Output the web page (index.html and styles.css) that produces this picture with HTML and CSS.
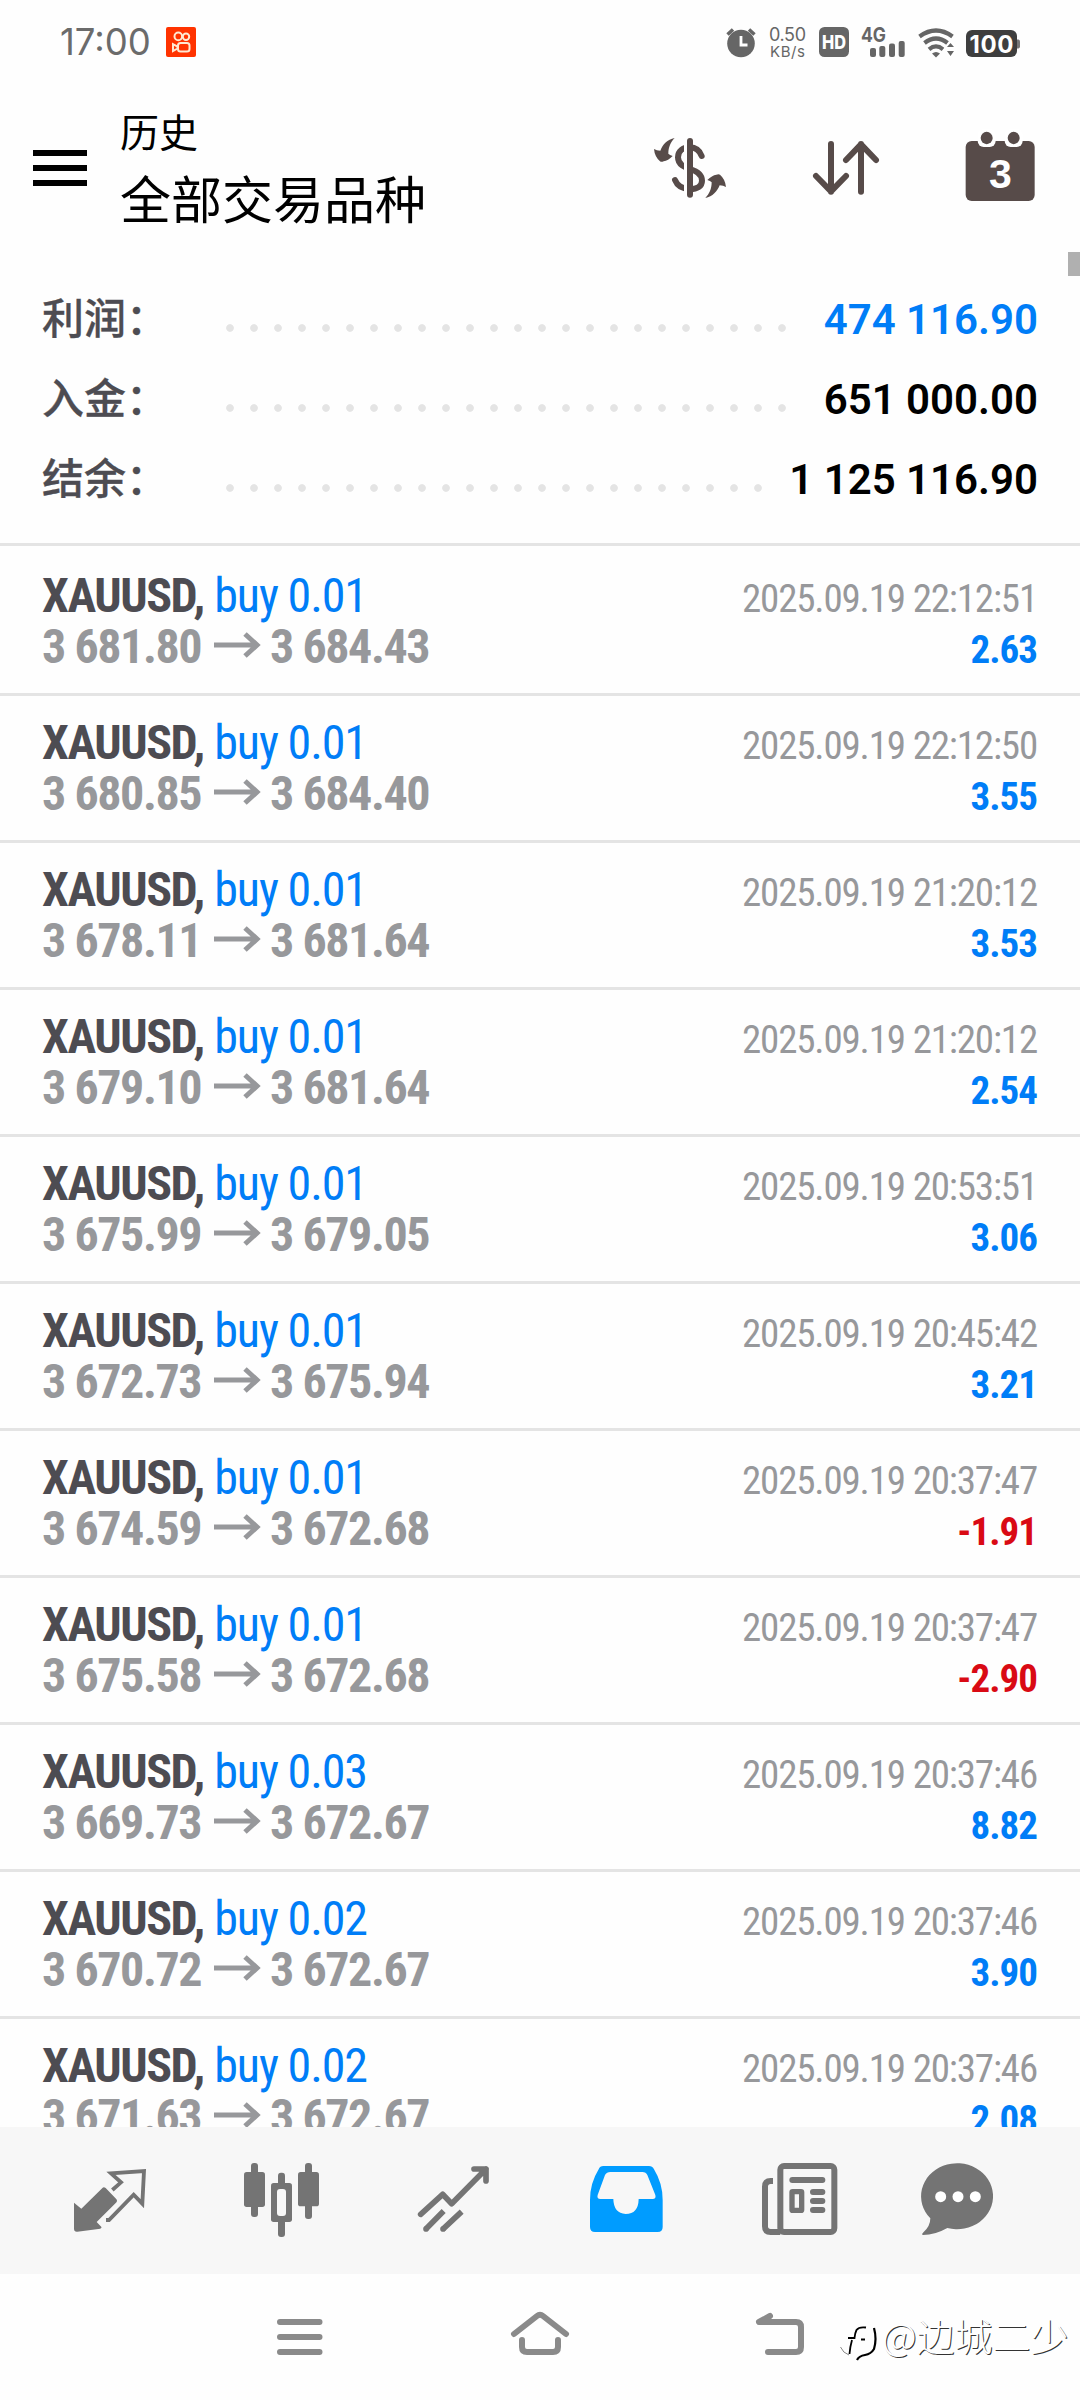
FILE: index.html
```html
<!DOCTYPE html>
<html lang="zh-CN">
<head>
<meta charset="utf-8">
<title>历史</title>
<link rel="stylesheet" href="styles.css">
</head>
<body>
<svg class="defs" width="0" height="0" aria-hidden="true">
  <symbol id="arrow" viewBox="0 0 47 26"><path d="M0 13H43M31 2L43 13L31 24" fill="none" stroke="currentColor" stroke-width="5"/></symbol>
</svg>

<div class="status">
  <span class="clock">17:00</span>
  <svg class="app-badge" width="30" height="30" viewBox="0 0 30 30"><rect width="30" height="30" rx="2" fill="#ff3300"/><g fill="none" stroke="#ffe9d2" stroke-width="2"><circle cx="12.3" cy="9.4" r="3.8"/><circle cx="20" cy="9.8" r="3.2"/><rect x="12" y="16" width="11.5" height="8.5" rx="2.5"/><path d="M7 17.2L11.5 19.5V21.500L7 24Z"/></g></svg>
  <svg class="status-icons" width="310" height="34" viewBox="720 25 310 34">
    <g fill="#666">
      <circle cx="741" cy="43.500" r="13.800"/>
      <path d="M727.500 34.500L733 29.500M754.500 34.500L749 29.500" stroke="#666" stroke-width="3.500"/>
      <path d="M741 36V45H747.500" fill="none" stroke="#fff" stroke-width="2.800"/>
      <text x="769" y="41" class="t-speed" textLength="37">0.50</text>
      <text x="770" y="56.500" class="t-unit" textLength="35">KB/s</text>
      <rect x="819" y="27" width="30" height="30" rx="5.500"/>
      <text x="822" y="49" class="t-hd" textLength="24" lengthAdjust="spacingAndGlyphs">HD</text>
      <text x="861" y="42" class="t-net" textLength="25" lengthAdjust="spacingAndGlyphs">4G</text>
      <rect x="870" y="48" width="6" height="9" rx="2"/><rect x="879.300" y="46" width="6" height="11" rx="2"/><rect x="889" y="43.500" width="6" height="13.500" rx="2"/><rect x="898.700" y="41" width="6" height="16" rx="2"/>
      <g fill="none" stroke="#666" stroke-width="4.200">
        <path d="M919.500 36.500Q936 24.500 952.500 36.500"/><path d="M924.500 43Q936 34 947.500 43"/><path d="M929 49.300Q936 43.500 943 49.300"/>
      </g>
      <path d="M932 53.500Q936 50.500 940 53.500L936 57.500Z"/>
      <path d="M944.500 47.500L950.500 40L957 47.500V51L950.500 58L944.500 51Z" fill="#fff"/>
      <path d="M947 47L950.500 43L954 47ZM947 51H954L950.500 56Z"/>
    </g>
    <rect x="966" y="30" width="51" height="27" rx="6" fill="#3e3e3e"/><path d="M1017 39.500H1018.500Q1020 40 1020 41.500V46.500Q1020 48 1018.500 48.500H1017Z" fill="#777"/>
    <text x="969.500" y="53" class="t-batt" textLength="44">100</text>
  </svg>
</div>

<header class="header">
  <div class="menu"><i></i><i></i><i></i></div>
  <div class="titles"><span class="sub">历史</span><span class="title">全部交易品种</span></div>
  <svg class="ic-money" width="76" height="76" viewBox="36 30 228 228">
    <path d="M185 108C178 90 168 82 150 82C130 82 114 92 114 112C114 135 135 142 150 147C170 153 186 162 186 182C186 199 172 207 150 207C128 207 112 198 105 180" fill="none" stroke="#574b49" stroke-width="18" stroke-linecap="round"/>
    <path d="M132 60H141V225H132Z" fill="#fff"/>
    <path d="M150 63V224" stroke="#574b49" stroke-width="18" stroke-linecap="round"/>
    <g fill="#574b49"><path id="swap" d="M104 54C82 58 68 74 61 92Q50 92 42 87Q44 110 60 124Q64 127 71 124Q84 122 98 108Q89 105 85 101C85 82 92 66 104 54Z"/><use href="#swap" transform="rotate(180 150 144)"/></g>
  </svg>
  <svg class="ic-sort" width="76" height="76" viewBox="504 30 228 228"><g fill="none" stroke="#574b49" stroke-width="18" stroke-linecap="round" stroke-linejoin="round"><path d="M573 72V215M528 168L573 214L618 168M663 215V72M618 120L663 73L708 120"/></g></svg>
  <svg class="ic-cal" width="76" height="76" viewBox="967 30 228 228"><rect x="978" y="63" width="207" height="180" rx="18" fill="#574b49"/><rect x="1014" y="27" width="54" height="54" rx="18" fill="#fff"/><rect x="1095" y="27" width="54" height="54" rx="18" fill="#fff"/><g fill="#574b49"><ellipse cx="1041" cy="54" rx="18" ry="18.500"/><ellipse cx="1122" cy="54" rx="18" ry="18.500"/></g><text x="1082" y="205" class="t-cal">3</text></svg>
</header>

<main class="scroll">
  <div class="thumb"></div>
  <section class="summary">
    <div class="sum"><span>利润：</span><i class="dots"></i><b class="up">474 116.90</b></div>
    <div class="sum"><span>入金：</span><i class="dots"></i><b>651 000.00</b></div>
    <div class="sum"><span>结余：</span><i class="dots"></i><b>1 125 116.90</b></div>
  </section>
  <section class="deals">
    <article><div class="line"><p><b>XAUUSD,</b> <em>buy 0.01</em></p><time>2025.09.19 22:12:51</time></div><div class="line"><p class="price">3 681.80<svg><use href="#arrow"/></svg>3 684.43</p><strong>2.63</strong></div></article>
    <article><div class="line"><p><b>XAUUSD,</b> <em>buy 0.01</em></p><time>2025.09.19 22:12:50</time></div><div class="line"><p class="price">3 680.85<svg><use href="#arrow"/></svg>3 684.40</p><strong>3.55</strong></div></article>
    <article><div class="line"><p><b>XAUUSD,</b> <em>buy 0.01</em></p><time>2025.09.19 21:20:12</time></div><div class="line"><p class="price">3 678.11<svg><use href="#arrow"/></svg>3 681.64</p><strong>3.53</strong></div></article>
    <article><div class="line"><p><b>XAUUSD,</b> <em>buy 0.01</em></p><time>2025.09.19 21:20:12</time></div><div class="line"><p class="price">3 679.10<svg><use href="#arrow"/></svg>3 681.64</p><strong>2.54</strong></div></article>
    <article><div class="line"><p><b>XAUUSD,</b> <em>buy 0.01</em></p><time>2025.09.19 20:53:51</time></div><div class="line"><p class="price">3 675.99<svg><use href="#arrow"/></svg>3 679.05</p><strong>3.06</strong></div></article>
    <article><div class="line"><p><b>XAUUSD,</b> <em>buy 0.01</em></p><time>2025.09.19 20:45:42</time></div><div class="line"><p class="price">3 672.73<svg><use href="#arrow"/></svg>3 675.94</p><strong>3.21</strong></div></article>
    <article><div class="line"><p><b>XAUUSD,</b> <em>buy 0.01</em></p><time>2025.09.19 20:37:47</time></div><div class="line"><p class="price">3 674.59<svg><use href="#arrow"/></svg>3 672.68</p><strong class="down">-1.91</strong></div></article>
    <article><div class="line"><p><b>XAUUSD,</b> <em>buy 0.01</em></p><time>2025.09.19 20:37:47</time></div><div class="line"><p class="price">3 675.58<svg><use href="#arrow"/></svg>3 672.68</p><strong class="down">-2.90</strong></div></article>
    <article><div class="line"><p><b>XAUUSD,</b> <em>buy 0.03</em></p><time>2025.09.19 20:37:46</time></div><div class="line"><p class="price">3 669.73<svg><use href="#arrow"/></svg>3 672.67</p><strong>8.82</strong></div></article>
    <article><div class="line"><p><b>XAUUSD,</b> <em>buy 0.02</em></p><time>2025.09.19 20:37:46</time></div><div class="line"><p class="price">3 670.72<svg><use href="#arrow"/></svg>3 672.67</p><strong>3.90</strong></div></article>
    <article><div class="line"><p><b>XAUUSD,</b> <em>buy 0.02</em></p><time>2025.09.19 20:37:46</time></div><div class="line"><p class="price">3 671.63<svg><use href="#arrow"/></svg>3 672.67</p><strong>2.08</strong></div></article>
  </section>
</main>

<nav class="tabs">
  <svg viewBox="36 60 228 240"><path d="M42 188L64 206L125 146Q130 138 137 144L168 176Q174 182 168 188L110 246L125 262L121 266L52 275Q42 276 42 266Z" fill="#747474"/><path d="M157 150L183 127L153 100L252 93L247 191L221 164L147 240H138" fill="none" stroke="#747474" stroke-width="11.500"/></svg>
  <svg viewBox="552 60 228 240"><g fill="#747474"><rect x="573" y="69" width="21" height="162" rx="9"/><rect x="552" y="96" width="63" height="105" rx="8"/><rect x="654" y="98" width="21" height="193" rx="9"/><rect x="633" y="129" width="63" height="117" rx="8"/><rect x="735" y="69" width="21" height="168" rx="9"/><rect x="714" y="96" width="63" height="103" rx="8"/></g><rect x="651" y="147" width="27" height="81" rx="9" fill="#f7f7f7"/></svg>
  <svg viewBox="1068 60 228 240"><g fill="none" stroke="#747474" stroke-width="17" stroke-linejoin="round"><path d="M1082 223L1148 163L1175 191L1278 87M1242 87H1278V123" stroke-linecap="round"/><path d="M1097 268L1151 213M1148 268L1205 215"/></g><g fill="#747474"><circle cx="1098" cy="267" r="8.500"/><circle cx="1149" cy="267" r="8.500"/></g></svg>
  <svg viewBox="145 180 228 240"><path d="M191 198H328Q338 198 343 208Q369 250 369 300V381Q369 396 354 396H166Q151 396 151 381V300Q151 250 177 208Q181 198 191 198ZM212 216H308Q319 216 323 225L347 285Q350 297 339 297H297Q296 342 258 342Q222 340 221 297H182Q171 297 174 285L196 225Q201 216 212 216Z" fill="#009cff" fill-rule="evenodd"/></svg>
  <svg viewBox="664 180 228 240" class="wide"><g fill="none" stroke="#747474" stroke-width="18"><rect x="722" y="198" width="162" height="198" rx="11"/><path d="M700 243H693Q676 243 676 260V379Q676 396 693 396H722"/><path d="M758 240H848M820 276H848M820 303H848M820 330H848" stroke-linecap="round"/><rect x="757" y="275" width="29" height="56" rx="2" stroke-width="16"/></g></svg>
  <svg viewBox="1140 180 228 240" class="last"><path d="M1171 355A108 99 0 1 1 1222 384Q1185 405 1149 405Q1144 403 1149 398Q1171 380 1171 355Z" fill="#747474"/><g fill="#fff"><circle cx="1202" cy="290" r="16.500"/><circle cx="1254" cy="290" r="16.500"/><circle cx="1306" cy="290" r="16.500"/></g></svg>
</nav>

<footer class="sysbar">
  <svg viewBox="0 0 60 60"><path d="M10 18H49.500M10 33H49.500M10 48H49.500"/></svg>
  <svg viewBox="0 0 60 60"><path d="M4 30L27 12Q30 9.500 33 12L56 30M12 36V43Q12 48 17 48H43Q48 48 48 43V36"/></svg>
  <svg viewBox="0 0 60 60"><path d="M20 12L9 18H46Q51 18 51 23V43Q51 48 46 48H18"/></svg>
  <div class="mark">
    <svg width="44" height="44" viewBox="0 0 44 44"><g fill="none" stroke="#000"><path d="M27 10.500Q20 9.500 17.500 13Q16 16 15.500 21H9M13 23Q11 30 10.500 37" stroke-width="1.800"/><path d="M10 38Q4 36 1.500 30" stroke="#888" stroke-width="1"/><path d="M35 11Q38 22 35 32Q32 37 26 38Q20 39 18 43M22 22.500H26" stroke-width="2.200"/></g></svg><span>@边城二少</span>
  </div>
</footer>
</body>
</html>
```
FILE: styles.css
```css
* { box-sizing: border-box; margin: 0; padding: 0; }
body {
  width: 1080px; height: 2400px; overflow: hidden; background: #fefefe;
  display: flex; flex-direction: column;
  font-family: Roboto, "Noto Sans CJK SC", sans-serif;
}
svg { display: block; flex: none; }
.defs { position: absolute; }

.status { height: 84px; display: flex; align-items: flex-start; padding-left: 60px; }
.clock { width: 106px; padding-top: 20px; font: 400 36.500px/44px Inter, sans-serif; color: #6b6b6b; }
.app-badge { margin-top: 27px; }
.status-icons { margin: 25px 0 0 524px; overflow: visible; }
.t-speed { font: 400 18px Inter, sans-serif; }
.t-unit { font: 400 15px Inter, sans-serif; }
.t-hd { font: 800 19px Inter, sans-serif; fill: #fff; }
.t-net { font: 700 20px Inter, sans-serif; }
.t-batt { font: 700 24px Inter, sans-serif; fill: #fff; }

.header { height: 168px; display: flex; align-items: flex-start; padding: 20px 0 0 33px; }
.menu { width: 54px; padding-top: 46px; display: flex; flex-direction: column; gap: 9px; }
.menu i { height: 6px; background: #000; }
.titles { width: 532px; margin: -3px 0 0 33px; display: flex; flex-direction: column; color: #000; font-family: "Noto Sans CJK SC", sans-serif; }
.sub { font-size: 39px; line-height: 58px; }
.title { font-size: 51px; line-height: 76px; }
.ic-money, .ic-sort, .ic-cal { margin-top: 26px; }
.ic-sort { margin-left: 80px; }
.ic-cal { margin-left: 78px; overflow: visible; }
.t-cal { font: 700 123px "Liberation Sans", sans-serif; fill: #fff; text-anchor: middle; }

.scroll { flex: 1; min-height: 0; overflow: hidden; position: relative; }
.thumb { position: absolute; right: 0; top: 0; width: 12px; height: 24px; background: #b0b0b0; }
.summary { height: 294px; padding: 27px 42px 0; border-bottom: 3px solid #e4e4e4; }
.sum { height: 80px; display: flex; line-height: 82px; font-size: 42px; }
.sum span { width: 126px; font: 500 42px/74px "Noto Sans CJK SC", sans-serif; color: #4d4c52; -webkit-text-stroke: 0.3px #4d4c52; white-space: nowrap; }
.sum b { font-weight: 600; color: #000; }
.sum .up { color: #007df7; }
.dots { flex: 1; height: 24px; margin: 37px 24px 0 50px; background: radial-gradient(circle at 12px 12px, #e4e4e4 3.4px, transparent 4.2px) 0 0 / 24px 24px; }

.deals { padding-top: 3px; }
.deals article { height: 147px; padding: 21px 42px 0; border-bottom: 3px solid #e4e4e4; }
.line { height: 51px; display: flex; justify-content: space-between; align-items: baseline; line-height: 51px; font-family: "Roboto Condensed", Roboto, sans-serif; white-space: nowrap; }
.line p { font-size: 48px; letter-spacing: -0.03em; color: #007df7; }
.line b { font-weight: 700; color: #4d4c52; }
.line em { margin-left: 1px; font-style: normal; letter-spacing: -0.024em; }
.line .price { font-weight: 700; color: #97989b; }
.price svg { display: inline-block; width: 47px; height: 26px; margin: 0 9px 0 13px; vertical-align: 5px; }
.line time { padding-right: 1px; font-size: 39px; letter-spacing: -0.03em; color: #97989b; }
.line strong { padding-right: 1px; font-size: 39px; font-weight: 700; letter-spacing: -0.025em; color: #007df7; }
.line .down { color: #d90a14; }

.tabs { height: 147px; background: #f7f7f7; display: flex; gap: 96px; padding: 33px 0 0 72px; }
.tabs svg { width: 76px; height: 80px; overflow: visible; }
.tabs .wide { margin-left: 1px; }
.tabs .last { margin-left: -13px; }

.sysbar { position: relative; height: 126px; display: flex; gap: 180px; padding: 30px 0 0 270px; }
.sysbar > svg { width: 60px; height: 60px; fill: none; stroke: #8a8a8a; stroke-width: 6; stroke-linecap: round; stroke-linejoin: round; }
.mark { position: absolute; left: 839px; top: 43px; display: flex; }
.mark span { font: 300 38px/44px "Noto Sans CJK SC", sans-serif; color: #fff; text-shadow: 1px 1px 0 #333; margin: -4px 0 0 -1px; white-space: nowrap; }
```
